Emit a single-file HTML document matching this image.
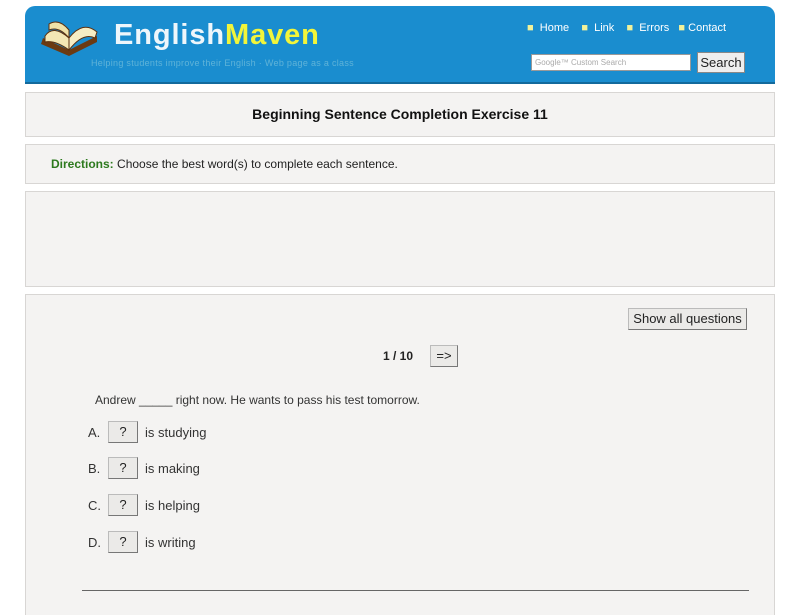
<!DOCTYPE html>
<html><head><style>
body{margin:0;width:800px;height:600px;background:#fff;font-family:"Liberation Sans",sans-serif;position:relative;overflow:hidden}
.hdr{position:absolute;left:25px;top:6px;width:750px;height:76px;background:#1a8dcf;border-radius:10px 10px 0 0;border-bottom:2px solid #136a9c}
.box{position:absolute;left:25px;width:748px;background:#f4f3f2;border:1px solid #d8d6d4}
.btn{position:absolute;background:#ebeae8;border:1px solid #bbb;border-right-color:#777;border-bottom-color:#777;font-size:13px;text-align:center;color:#222}
.opt{position:absolute;font-size:13px;color:#333}
</style></head><body>
<div class="hdr">
<svg style="position:absolute;left:14px;top:10px" width="62" height="42" viewBox="0 0 62 42">
<path d="M4 22 L30 34 L58 20 L58 26 L30 40 L2 28Z" fill="#6b3a12"/>
<path d="M6 20 Q14 8 30 22 L30 34 Q16 24 6 26Z" fill="#f3e7b4" stroke="#5a3010"/>
<path d="M30 22 Q44 4 58 16 L56 22 Q44 16 30 34Z" fill="#f6edc4" stroke="#5a3010"/>
<path d="M10 8 Q20 2 30 14 L30 22 Q20 10 10 14Z" fill="#efe2a8" stroke="#5a3010"/>
</svg>
<div style="position:absolute;left:89px;top:13px;font-size:29px;font-weight:bold;color:#eef6fb;letter-spacing:0.9px">English<span style="color:#f2f53a">Maven</span></div>
<div style="position:absolute;left:66px;top:52px;font-size:9px;color:#5fb3d8;letter-spacing:0.3px">Helping students improve their English · Web page as a class</div>
<div style="position:absolute;left:502px;top:16px;font-size:11px;color:#fff;word-spacing:0">
<span style="color:#f2f29a">■</span>&nbsp; Home &nbsp;&nbsp;&nbsp;<span style="color:#f2f29a">■</span>&nbsp; Link &nbsp;&nbsp;&nbsp;<span style="color:#f2f29a">■</span>&nbsp; Errors &nbsp;&nbsp;<span style="color:#f2f29a">■</span> Contact</div>
<div style="position:absolute;left:506px;top:48px;width:160px;height:17px;background:#fff;border:1px solid #999;font-size:8px;color:#aaa;line-height:16px;padding-left:3px;box-sizing:border-box">Google™ Custom Search</div>
<div style="position:absolute;left:672px;top:46px;width:46px;height:19px;background:#eee;border:1px solid #888;font-size:13px;line-height:19px;text-align:center;color:#222">Search</div>
</div>
<div class="box" style="top:92px;height:43px"><div style="text-align:center;font-weight:bold;font-size:14px;line-height:43px;color:#111">Beginning Sentence Completion Exercise 11</div></div>
<div class="box" style="top:144px;height:38px"><div style="position:absolute;left:25px;top:12px;font-size:12px;color:#222"><b style="color:#2d7a1e">Directions:</b> Choose the best word(s) to complete each sentence.</div></div>
<div class="box" style="top:191px;height:94px"></div>
<div class="box" style="top:294px;height:320px;border-bottom:none"></div>
<div class="btn" style="left:628px;top:308px;width:117px;height:20px;line-height:20px">Show all questions</div>
<div style="position:absolute;left:383px;top:349px;font-size:12px;font-weight:bold;color:#222">1 / 10</div>
<div class="btn" style="left:430px;top:345px;width:26px;height:20px;line-height:20px">=&gt;</div>
<div class="opt" style="left:95px;top:393px;font-size:12px">Andrew _____ right now. He wants to pass his test tomorrow.</div>
<div class="opt" style="left:88px;top:425px">A.</div><div class="btn" style="left:108px;top:421px;width:28px;height:20px;line-height:20px">?</div><div class="opt" style="left:145px;top:425px">is studying</div>
<div class="opt" style="left:88px;top:461px">B.</div><div class="btn" style="left:108px;top:457px;width:28px;height:20px;line-height:20px">?</div><div class="opt" style="left:145px;top:461px">is making</div>
<div class="opt" style="left:88px;top:498px">C.</div><div class="btn" style="left:108px;top:494px;width:28px;height:20px;line-height:20px">?</div><div class="opt" style="left:145px;top:498px">is helping</div>
<div class="opt" style="left:88px;top:535px">D.</div><div class="btn" style="left:108px;top:531px;width:28px;height:20px;line-height:20px">?</div><div class="opt" style="left:145px;top:535px">is writing</div>
<div style="position:absolute;left:82px;top:590px;width:667px;height:1px;background:#666"></div>
</body></html>
